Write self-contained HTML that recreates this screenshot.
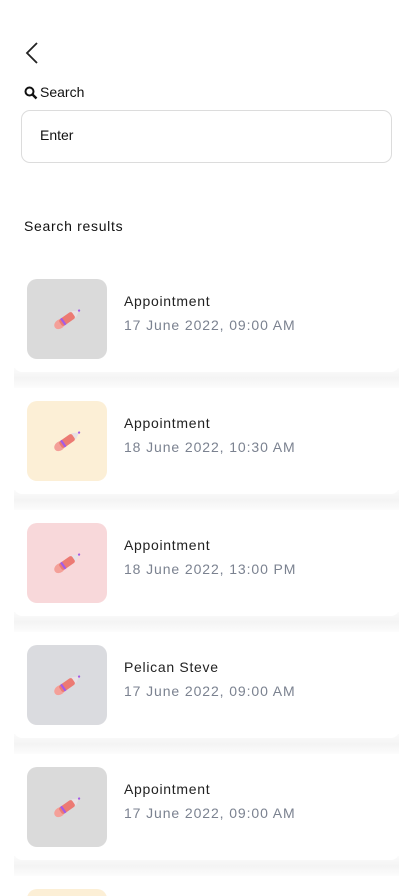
<!DOCTYPE html>
<html style="height:896px;overflow:hidden"><head><meta charset="utf-8"><style>
body{margin:0;width:414px;height:896px;overflow:hidden;background:#fff;font-family:"Liberation Sans",Roboto,sans-serif;position:relative}
#wrap{position:absolute;left:0;top:0;width:414px;height:896px;overflow:hidden}
.abs{position:absolute}
.card{position:absolute;left:14px;width:385px;height:106px;background:#fff;border-radius:8px}
.band{position:absolute;left:14px;width:385px;height:20px;background:linear-gradient(#fbfbfb,#f4f4f4 50%,#fcfcfc)}
.th{position:absolute;left:13px;top:13px;width:80px;height:80px;border-radius:10px}
.t1{position:absolute;left:110px;top:27px;font-size:14px;color:#222;letter-spacing:.7px}
.t2{position:absolute;left:110px;top:51px;font-size:14px;color:#7b8290;letter-spacing:.9px}
.pen{position:absolute;left:23px;top:23px}
</style></head><body><div id="wrap">
<svg class="abs" style="left:24px;top:41px" width="16" height="24" viewBox="0 0 16 24"><path d="M13 2 L3 12 L13 22" fill="none" stroke="#222" stroke-width="1.8"/></svg>
<svg class="abs" style="left:24px;top:86px" width="14" height="14" viewBox="0 0 14 14"><circle cx="5.5" cy="5.5" r="4" fill="none" stroke="#111" stroke-width="2"/><path d="M8.5 8.5 L12.5 12.5" stroke="#111" stroke-width="2.4"/></svg>
<div class="abs" style="left:40px;top:84px;font-size:14px;color:#111">Search</div>
<div class="abs" style="left:21px;top:110px;width:369px;height:51px;border:1px solid #dcdcdc;border-radius:9px"></div>
<div class="abs" style="left:40px;top:127px;font-size:14px;color:#111">Enter</div>
<div class="abs" style="left:24px;top:218px;font-size:14px;color:#111;letter-spacing:.7px">Search results</div>
<div id="list"></div>
</div>
<script>
var d=[["#dadada","Appointment","17 June 2022, 09:00 AM"],["#fcefd6","Appointment","18 June 2022, 10:30 AM"],["#f8d8da","Appointment","18 June 2022, 13:00 PM"],["#dadbdf","Pelican Steve","17 June 2022, 09:00 AM"],["#dadada","Appointment","17 June 2022, 09:00 AM"],["#fcefd6","Appointment","17 June 2022, 09:00 AM"]];
var pen='<svg class="pen" width="34" height="34" viewBox="0 0 30 30"><g transform="rotate(-35 15 15)"><ellipse cx="7" cy="15" rx="5" ry="4" fill="#f4a099"/><rect x="8" y="11.5" width="14" height="7" rx="2" fill="#ec7a73"/><rect x="10" y="11.5" width="2" height="7" fill="#a35be8"/><path d="M22 11.5 L28 15 L22 18.5Z" fill="#e8e0e4"/><circle cx="28" cy="15" r="1" fill="#a35be8"/></g></svg>';
var h='';
d.forEach(function(r,i){var y=266+i*122;h+='<div class="band" style="top:'+(y+102)+'px"></div><div class="card" style="top:'+y+'px"><div class="th" style="background:'+r[0]+'">'+pen+'</div><div class="t1">'+r[1]+'</div><div class="t2">'+r[2]+'</div></div>';});
document.getElementById('list').innerHTML=h;
</script>
</body></html>
